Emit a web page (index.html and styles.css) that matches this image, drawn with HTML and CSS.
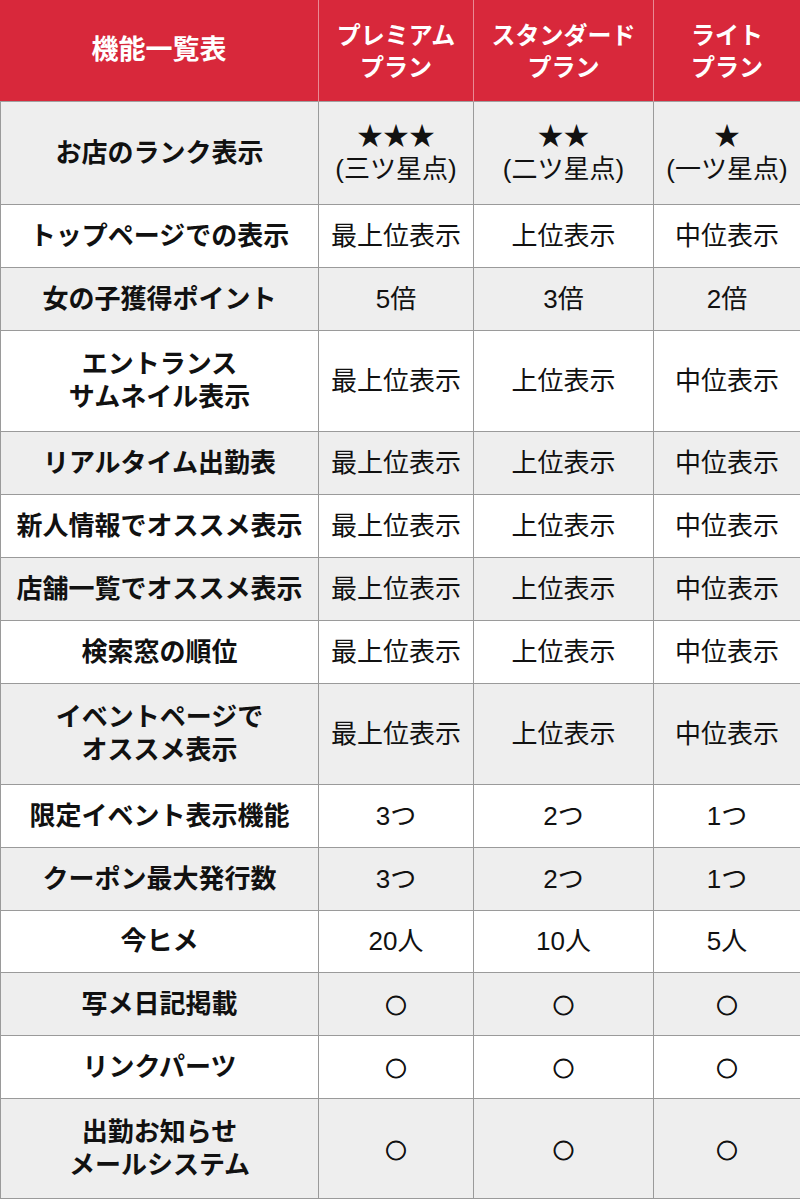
FILE: index.html
```html
<!DOCTYPE html>
<html lang="ja">
<head>
<meta charset="utf-8">
<title>機能一覧表</title>
<link rel="stylesheet" href="styles.css">
</head>
<body>
<div class="table">
  <div class="cell head feature">機能一覧表</div>
  <div class="cell head plan">プレミアム<br>プラン</div>
  <div class="cell head plan">スタンダード<br>プラン</div>
  <div class="cell head plan">ライト<br>プラン</div>

  <div class="cell name gray">お店のランク表示</div>
  <div class="cell val gray">★★★<br>(三ツ星点)</div>
  <div class="cell val gray">★★<br>(二ツ星点)</div>
  <div class="cell val gray">★<br>(一ツ星点)</div>

  <div class="cell name">トップページでの表示</div>
  <div class="cell val">最上位表示</div>
  <div class="cell val">上位表示</div>
  <div class="cell val">中位表示</div>

  <div class="cell name gray">女の子獲得ポイント</div>
  <div class="cell val gray">5倍</div>
  <div class="cell val gray">3倍</div>
  <div class="cell val gray">2倍</div>

  <div class="cell name">エントランス<br>サムネイル表示</div>
  <div class="cell val">最上位表示</div>
  <div class="cell val">上位表示</div>
  <div class="cell val">中位表示</div>

  <div class="cell name gray">リアルタイム出勤表</div>
  <div class="cell val gray">最上位表示</div>
  <div class="cell val gray">上位表示</div>
  <div class="cell val gray">中位表示</div>

  <div class="cell name">新人情報でオススメ表示</div>
  <div class="cell val">最上位表示</div>
  <div class="cell val">上位表示</div>
  <div class="cell val">中位表示</div>

  <div class="cell name gray">店舗一覧でオススメ表示</div>
  <div class="cell val gray">最上位表示</div>
  <div class="cell val gray">上位表示</div>
  <div class="cell val gray">中位表示</div>

  <div class="cell name">検索窓の順位</div>
  <div class="cell val">最上位表示</div>
  <div class="cell val">上位表示</div>
  <div class="cell val">中位表示</div>

  <div class="cell name gray">イベントページで<br>オススメ表示</div>
  <div class="cell val gray">最上位表示</div>
  <div class="cell val gray">上位表示</div>
  <div class="cell val gray">中位表示</div>

  <div class="cell name">限定イベント表示機能</div>
  <div class="cell val">3つ</div>
  <div class="cell val">2つ</div>
  <div class="cell val">1つ</div>

  <div class="cell name gray">クーポン最大発行数</div>
  <div class="cell val gray">3つ</div>
  <div class="cell val gray">2つ</div>
  <div class="cell val gray">1つ</div>

  <div class="cell name">今ヒメ</div>
  <div class="cell val">20人</div>
  <div class="cell val">10人</div>
  <div class="cell val">5人</div>

  <div class="cell name gray">写メ日記掲載</div>
  <div class="cell val gray"><span class="circle">○</span></div>
  <div class="cell val gray"><span class="circle">○</span></div>
  <div class="cell val gray"><span class="circle">○</span></div>

  <div class="cell name">リンクパーツ</div>
  <div class="cell val"><span class="circle">○</span></div>
  <div class="cell val"><span class="circle">○</span></div>
  <div class="cell val"><span class="circle">○</span></div>

  <div class="cell name gray">出勤お知らせ<br>メールシステム</div>
  <div class="cell val gray"><span class="circle">○</span></div>
  <div class="cell val gray"><span class="circle">○</span></div>
  <div class="cell val gray"><span class="circle">○</span></div>
</div>
</body>
</html>
```

FILE: styles.css
```css
html, body {
  margin: 0;
  padding: 0;
  background: #ffffff;
}

body {
  font-family: "Liberation Sans", "Noto Sans CJK JP", sans-serif;
  color: #111111;
}

.table {
  display: grid;
  grid-template-columns: 318px 155px 180px 147px;
  grid-template-rows: 102px 103px 63px 63px 101px 63px 63px 63px 63px 101px 63px 63px 62px 63px 63px 100px;
  width: 800px;
}

.cell {
  box-sizing: border-box;
  display: flex;
  align-items: center;
  justify-content: center;
  text-align: center;
  border-bottom: 1px solid #9a9a9a;
  border-left: 1px solid #9a9a9a;
  font-size: 26px;
  line-height: 33px;
  background: #ffffff;
}

.cell.gray {
  background: #eeeeee;
}

.head {
  background: #d8283b;
  color: #ffffff;
  font-weight: bold;
  border-left: 1px solid #e98a94;
  border-bottom: 1px solid #a0a0a0;
}

.head.feature {
  border-left: none;
  font-size: 27px;
}

.head.plan {
  font-size: 24px;
  line-height: 32px;
  padding-top: 2px;
}

.name {
  font-weight: bold;
}

.val {
  font-weight: normal;
}

.circle {
  font-family: "Noto Sans CJK JP", sans-serif;
  font-size: 21px;
  font-weight: bold;
  line-height: 24px;
  color: #111111;
  -webkit-text-stroke: 0.9px #111111;
}
```
